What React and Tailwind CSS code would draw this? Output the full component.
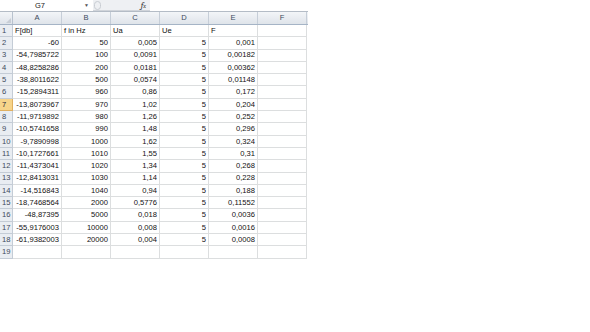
import React from "react";

const rows = [
  ["F[db]", "f in Hz", "Ua", "Ue", "F", ""],
  ["-60", "50", "0,005", "5", "0,001", ""],
  ["-54,7985722", "100", "0,0091", "5", "0,00182", ""],
  ["-48,8258286", "200", "0,0181", "5", "0,00362", ""],
  ["-38,8011622", "500", "0,0574", "5", "0,01148", ""],
  ["-15,2894311", "960", "0,86", "5", "0,172", ""],
  ["-13,8073967", "970", "1,02", "5", "0,204", ""],
  ["-11,9719892", "980", "1,26", "5", "0,252", ""],
  ["-10,5741658", "990", "1,48", "5", "0,296", ""],
  ["-9,7890998", "1000", "1,62", "5", "0,324", ""],
  ["-10,1727661", "1010", "1,55", "5", "0,31", ""],
  ["-11,4373041", "1020", "1,34", "5", "0,268", ""],
  ["-12,8413031", "1030", "1,14", "5", "0,228", ""],
  ["-14,516843", "1040", "0,94", "5", "0,188", ""],
  ["-18,7468564", "2000", "0,5776", "5", "0,11552", ""],
  ["-48,87395", "5000", "0,018", "5", "0,0036", ""],
  ["-55,9176003", "10000", "0,008", "5", "0,0016", ""],
  ["-61,9382003", "20000", "0,004", "5", "0,0008", ""],
  ["", "", "", "", "", ""],
];

const cols = ["A", "B", "C", "D", "E", "F"];

export default function App() {
  return (
    <div
      className="w-[590px] h-[332px] bg-white overflow-hidden text-[7.6px] leading-none text-[#111]"
      style={{ fontFamily: '"Liberation Sans", Arial, sans-serif' }}
    >
      {/* formula bar */}
      <div className="flex h-[11px] w-[308px] items-center">
        <div className="w-[80px] flex justify-center text-[#222] text-[7.5px] pt-[1px]">G7</div>
        <div className="w-[13px] flex justify-center text-[#555] text-[5px]">▼</div>
        <div className="flex-1 h-full bg-[#eef0f3] flex items-center border-b border-[#d0d4da]">
          <div className="w-[7px] h-[9px] rounded-full border border-[#c8ccd2] ml-[1px]"></div>
          <div className="flex-1"></div>
          <span className="italic text-[#333] text-[9px] mr-[4px] font-serif">f<span className="text-[6px]">x</span></span>
        </div>
        <div className="w-[158px] h-full"></div>
      </div>
      {/* header */}
      <div className="flex h-[14px] w-[308px] border-t border-[#b4bcc6] border-b border-b-[#a5b4c6] bg-gradient-to-b from-[#f3f5f8] to-[#dfe4ea]">
        <div className="w-[13px] border-r border-[#b8c2ce] flex items-end justify-end pr-[1px] pb-[1px]">
          <div className="w-0 h-0 border-l-[5px] border-l-transparent border-b-[5px] border-b-[#c8ced6]"></div>
        </div>
        {cols.map((c) => (
          <div key={c} className="w-[49px] border-r border-[#c6ced8] flex items-center justify-center text-[#3d4a5c]">
            {c}
          </div>
        ))}
      </div>
      {rows.map((r, i) => (
        <div key={i} className="flex h-[12.3px] w-[308px]">
          <div
            className={
              "w-[13px] border-r border-b flex items-center pl-[2px] " +
              (i === 6
                ? "bg-[#f7d48a] border-[#e0b060] text-[#1f2a3a]"
                : "bg-[#e9edf2] border-[#c4ccd6] text-[#3d4a5c]")
            }
          >
            {i + 1}
          </div>
          {r.map((v, j) => (
            <div
              key={j}
              className={
                "w-[49px] border-r border-b border-[#dcdedf] flex items-center px-[2px] overflow-hidden whitespace-nowrap " +
                (i === 0 ? "justify-start" : "justify-end")
              }
            >
              {v}
            </div>
          ))}
        </div>
      ))}
    </div>
  );
}
